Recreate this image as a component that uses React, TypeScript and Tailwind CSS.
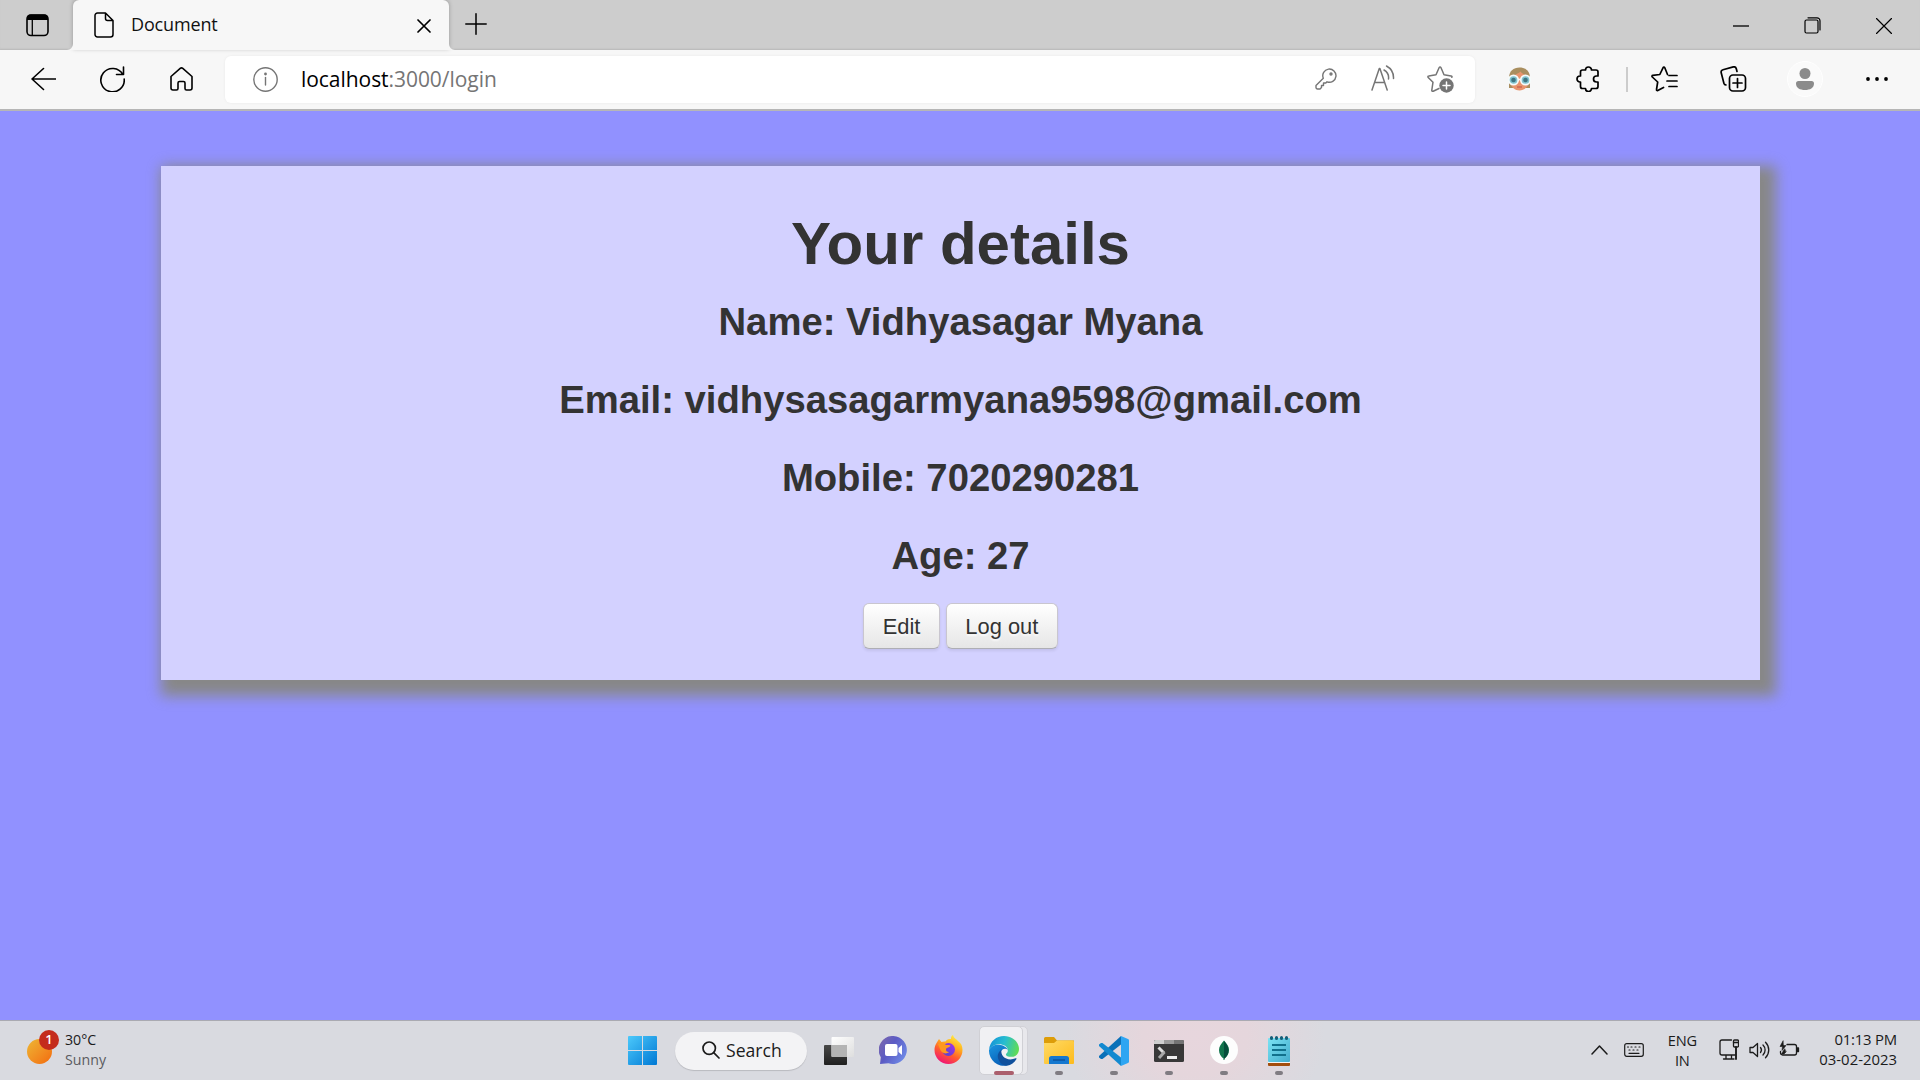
import React from "react";

const line = { fill: "none", stroke: "currentColor", strokeLinecap: "round", strokeLinejoin: "round" } as const;

function TabStrip() {
  return (
    <div className="flex h-[50px] items-stretch bg-[#cdcdcd]">
      <div className="flex w-[73px] items-center pl-[26px] shadow-[inset_0_-2px_2px_-1px_#b8b8b8]">
        <svg width="23" height="23" viewBox="0 0 23 23">
          <rect x="1" y="1" width="21" height="20.5" rx="4" fill="none" stroke="#000" strokeWidth="1.6" />
          <path d="M1 6V4a3.500 3.500 0 0 1 3.500-3.500h14A3.500 3.500 0 0 1 22 4v2z" />
          <path d="M6.300 5v16" stroke="#000" strokeWidth="1.300" />
        </svg>
      </div>
      <div className="relative z-10 flex w-[376px] items-center rounded-t-[6px] bg-[#f7f7f7] pl-[21px] pr-[18px] shadow-[0_-1px_4px_rgba(0,0,0,0.25)]">
        <svg className="absolute -left-[6px] bottom-0" width="6" height="6"><path d="M6 0v6H0a6 6 0 0 0 6-6" fill="#f7f7f7" /></svg>
        <svg className="absolute -right-[6px] bottom-0" width="6" height="6"><path d="M0 0v6h6a6 6 0 0 1-6-6" fill="#f7f7f7" /></svg>
        <svg width="20" height="26" viewBox="0 0 20 26" {...line} strokeWidth="1.500">
          <path d="M11.500 1H3.500A2.500 2.500 0 0 0 1 3.500v19A2.500 2.500 0 0 0 3.500 25h13a2.500 2.500 0 0 0 2.500-2.500V8.500zV6.500a2 2 0 0 0 2 2H19" />
        </svg>
        <span className="ml-[17px] mb-[2px] text-[18px] leading-none tracking-[-0.15px] text-[#111]">Document</span>
        <svg className="mt-[1px] ml-auto" width="14" height="14" viewBox="0 0 14 14" {...line} strokeWidth="1.700"><path d="M1 1l12 12M13 1L1 13" /></svg>
      </div>
      <div className="flex flex-1 items-center pl-[16px] pb-[2px] shadow-[inset_0_-2px_2px_-1px_#b8b8b8]">
        <svg width="22" height="22" viewBox="0 0 22 22" {...line} strokeWidth="1.500"><path d="M11 .8v20.400M.8 11h20.400" /></svg>
        <svg className="ml-auto mr-[55px] mt-[3px]" width="16" height="2"><path d="M0 1h16" stroke="#000" strokeWidth="1.300" /></svg>
        <svg className="mr-[55px] mt-[3px]" width="17" height="17" viewBox="0 0 17 17" {...line} strokeWidth="1.200">
          <rect x="1" y="3" width="13" height="13" rx="1.500" />
          <path d="M4 .8h9a3 3 0 0 1 3 3V13" />
        </svg>
        <svg className="mr-[28px] mt-[3px]" width="16" height="16" viewBox="0 0 16 16" {...line} strokeWidth="1.200"><path d="M.5.5l15 15M15.500.5l-15 15" /></svg>
      </div>
    </div>
  );
}

function Toolbar() {
  return (
    <div className="flex h-[61px] items-center border-b-2 border-[#b6b6b6] bg-[#f7f7f7] pb-px pl-[31px] text-black">
      <svg width="25" height="24" viewBox="0 0 25 24" {...line} strokeWidth="1.600"><path d="M12.500 1.500L1 12l11.500 10.500M1 12h23.500" /></svg>
      <svg className="ml-[44px]" width="25" height="26" viewBox="0 0 25 26" {...line} strokeWidth="1.600">
        <path d="M22.800 8.500A11.700 11.700 0 1 0 24.200 13M23.500 1v7.500H16.500" />
      </svg>
      <svg className="ml-[45px]" width="23" height="24" viewBox="0 0 23 24" {...line} strokeWidth="1.600">
        <path d="M1 9.500L10.200 1.400a2 2 0 0 1 2.600 0L22 9.500V21a2 2 0 0 1-2 2h-3.500a1.500 1.500 0 0 1-1.500-1.500V16a1.500 1.500 0 0 0-1.500-1.500h-4A1.500 1.500 0 0 0 8 16v5.500A1.500 1.500 0 0 1 6.500 23H3a2 2 0 0 1-2-2z" />
      </svg>
      <div className="ml-[32px] flex h-[47px] w-[1250px] items-center rounded-[6px] bg-white pl-[28px] pr-[21px] text-[#757575] shadow-[0_0_3px_rgba(0,0,0,0.06)]">
        <svg width="25" height="25" viewBox="0 0 25 25" {...line} strokeWidth="1.400">
          <circle cx="12.500" cy="12.500" r="11.700" /><path d="M12.500 10.500V18" /><circle cx="12.500" cy="7" r=".7" fill="currentColor" />
        </svg>
        <span className="ml-[23px] text-[21px] leading-none tracking-[-0.05px]"><span className="text-black">localhost</span>:3000/login</span>
        <svg className="ml-auto" width="22" height="22" viewBox="0 0 22 22" {...line} strokeWidth="1.400">
          <path d="M8.300 10.200A6.600 6.600 0 1 1 12 13.800L10.800 15H8.500v2.500H6.500V19.500L5 21H2.500A1.500 1.500 0 0 1 1 19.500V17.500z" /><circle cx="16" cy="6" r="1" />
        </svg>
        <svg className="ml-[34px] mb-[2px]" width="24" height="26" viewBox="0 0 24 26" {...line} strokeWidth="1.500">
          <path d="M1 25L8.300 3.500h.6L16.200 25M3.700 17.500h9.800M13 5a9 9 0 0 1 4.500 9M15.500 1a13.500 13.500 0 0 1 7 12.500" />
        </svg>
        <svg className="ml-[32px]" width="27" height="28" viewBox="0 0 27 28" {...line} strokeWidth="1.500">
          <path d="M12 23.500l-5.800 2.700c-.8.400-1.500-.2-1.400-1L6 17.200 1.200 12.500c-.5-.5-.3-1.500.6-1.600L9 9.700 12.200 2.500c.4-.8 1.300-.8 1.700 0L17 9.700l7 1.200c.9.200 1.200.8.800 1.400" />
          <circle cx="19.500" cy="20.500" r="7.200" fill="currentColor" stroke="none" />
          <path d="M19.500 17v7M16 20.500h7" stroke="#fff" />
        </svg>
      </div>
      <svg className="ml-[32px]" width="25" height="24" viewBox="0 0 25 24">
        <path d="M2 21V11C2 4 6.500.5 12.500.5S23 4 23 11v10z" fill="#a98e5f" />
        <path d="M3.500 13c0-5 6.500-5 10-8.500 2 3 8 3.500 8 8.500v2c0 5.500-5 8.500-9 8.500s-9-3-9-8.500z" fill="#e8946d" />
        <circle cx="6.500" cy="13" r="4.700" fill="#7fc3cf" stroke="#f5fbfb" strokeWidth="1.700" />
        <circle cx="18.500" cy="13" r="4.700" fill="#7fc3cf" stroke="#f5fbfb" strokeWidth="1.700" />
        <path d="M11 12.500h3" stroke="#f5fbfb" strokeWidth="1.700" />
        <circle cx="6.500" cy="13" r="2.300" fill="#3f7480" /><circle cx="18.500" cy="13" r="2.300" fill="#3f7480" />
        <path d="M10 20h5" stroke="#c95b4e" strokeWidth="1.200" />
      </svg>
      <svg className="ml-[44px]" width="24" height="26" viewBox="0 0 24 26" {...line} strokeWidth="1.700">
        <path d="M9.500 4a3 3 0 0 1 6 0H20a2 2 0 0 1 2 2v4h-1.500a3 3 0 0 0 0 6H22v4.500a2 2 0 0 1-2 2h-4.500a3 3 0 0 1-6 0H6.500a2 2 0 0 1-2-2V16H4a3 3 0 0 1 0-6h.5V6a2 2 0 0 1 2-2z" />
      </svg>
      <div className="ml-[26px] h-[25px] w-[2px] bg-[#cccccc]" />
      <svg className="ml-[23px]" width="27" height="26" viewBox="0 0 27 26" {...line} strokeWidth="1.700">
        <path d="M12.500 21.500l-5.700 3c-.8.400-1.500-.2-1.300-1L6.700 16 1.300 11c-.6-.6-.3-1.500.5-1.600L8.800 8.500 12 1.800c.4-.8 1.400-.8 1.800 0L16.500 8.500M18 9.500h8M16 15h10M18 20.500h8" />
      </svg>
      <svg className="ml-[42px]" width="27" height="26" viewBox="0 0 27 26" {...line} strokeWidth="1.700">
        <rect x="9.500" y="9" width="16" height="16" rx="3.500" />
        <path d="M17.500 12.500v9M13 17h9M17 5.500l-.7-2.800a2.500 2.500 0 0 0-3-1.800L3 3.700A2.500 2.500 0 0 0 1.200 6.700l2.700 10.500A2.500 2.500 0 0 0 6 19" />
      </svg>
      <div className="ml-[40px] flex h-[36px] w-[36px] items-center justify-center rounded-full border border-white bg-[#fafafa]">
        <svg width="18" height="22" viewBox="0 0 18 22" fill="#8b8b8b"><circle cx="9" cy="5.500" r="5.500" /><path d="M0 15.500A2.500 2.500 0 0 1 2.500 13h13a2.500 2.500 0 0 1 2.500 2.500C18 20 14 22 9 22s-9-2-9-6.500" /></svg>
      </div>
      <svg className="ml-[43px]" width="22" height="4"><circle cx="2" cy="2" r="1.900" /><circle cx="11" cy="2" r="1.900" /><circle cx="20" cy="2" r="1.900" /></svg>
    </div>
  );
}

function Button({ children }: { children: React.ReactNode }) {
  return (
    <button className="h-[46px] rounded-[6px] border border-[#c9c6cf] border-b-[#aeaeb4] bg-linear-to-b from-white to-[#e6e6e6] px-[18.5px] text-[21.875px] leading-[31px] text-[#333] shadow-[0_2px_3px_rgba(0,0,0,0.08)] [text-shadow:0_2px_2px_rgba(255,255,255,0.75)]">
      {children}
    </button>
  );
}

const details = ["Name: Vidhyasagar Myana", "Email: vidhysasagarmyana9598@gmail.com", "Mobile: 7020290281", "Age: 27"];

function Page() {
  return (
    <main className="flex-1 bg-[#9191ff] pt-[55px] font-['Liberation_Sans',Arial,sans-serif]">
      <section className="ml-[161px] h-[514px] w-[1599px] bg-[#d3d1ff] pt-[47px] text-center text-[#333] shadow-[7.8px_7.8px_13px_7.8px_#888]">
        <h1 className="mb-[15.6px] text-[60px] leading-[62.5px] font-bold">Your details</h1>
        {details.map((d) => (
          <h3 key={d} className="mb-[15.6px] text-[38.25px] leading-[62.5px] font-bold">{d}</h3>
        ))}
        <div className="flex justify-center gap-[6px]">
          <Button>Edit</Button>
          <Button>Log out</Button>
        </div>
      </section>
    </main>
  );
}

function TaskApp({ children, active }: { children: React.ReactNode; active?: boolean }) {
  return (
    <div className="relative flex h-[59px] w-[55px] items-center justify-center">
      {children}
      <div className={active ? "absolute bottom-[5px] h-[4px] w-[20px] rounded-full bg-[#ab5f6d]" : "absolute bottom-[5px] h-[4px] w-[8px] rounded-full bg-[#807c82]"} />
    </div>
  );
}

function Taskbar() {
  return (
    <footer className="flex h-[60px] items-center border-t border-[#aaaab2] bg-[#d9dae0] bg-[radial-gradient(ellipse_130px_100px_at_1195px_15px,#e7d6dd_0%,#e5d6dc_40%,transparent_100%)] text-[#1b1b1b]">
      <div className="flex w-[628px] items-center pb-[2px] pl-[27px]">
        <div className="relative mr-[6px] mb-[6px] h-[34px] w-[32px]">
          <div className="absolute bottom-0 left-0 h-[25px] w-[25px] rounded-full bg-linear-to-br from-[#ecb634] to-[#f2690d]" />
          <div className="absolute top-0 right-0 flex h-[20px] w-[20px] items-center justify-center rounded-full bg-[#c42b1c] text-[13px] leading-none font-semibold text-white">1</div>
        </div>
        <div className="text-[14.2px] leading-[20px]">
          <div>30°C</div>
          <div className="text-[#5b5b5f]">Sunny</div>
        </div>
      </div>
      <svg width="29" height="29" viewBox="0 0 29 29">
        <defs><linearGradient id="win" x1="0" y1="0" x2="1" y2="1" gradientUnits="objectBoundingBox"><stop stopColor="#4cc9fb" /><stop offset="1" stopColor="#0078d4" /></linearGradient></defs>
        <path d="M1 0h13v14H0V1a1 1 0 0 1 1-1M15 0h13a1 1 0 0 1 1 1v13H15zM0 15h14v14H1a1 1 0 0 1-1-1zM15 15h14v13a1 1 0 0 1-1 1H15z" fill="url(#win)" />
      </svg>
      <div className="ml-[18px] flex h-[38px] w-[132px] items-center rounded-full bg-[#f3f3f5] pl-[27px] shadow-[0_1px_1px_rgba(0,0,0,0.15)]">
        <svg className="mb-[2px]" width="18" height="18" viewBox="0 0 18 18" {...line} strokeWidth="1.700"><circle cx="7.200" cy="7.200" r="6.200" /><path d="M11.700 11.700L17 17" /></svg>
        <span className="ml-[6px] text-[17.6px] leading-none">Search</span>
      </div>
      <svg className="ml-[17px]" width="30" height="28" viewBox="0 0 30 28">
        <defs>
          <linearGradient id="tv1" x1="0" y1="0" x2="0" y2="1"><stop stopColor="#484848" /><stop offset="1" stopColor="#202020" /></linearGradient>
          <linearGradient id="tv2" x1="0" y1="0" x2="1" y2="1"><stop stopColor="#fff" /><stop offset="1" stopColor="#dedede" /></linearGradient>
        </defs>
        <rect x="0" y="8" width="23" height="20" rx="1" fill="url(#tv1)" />
        <rect x="7.500" y="0" width="22.500" height="20" rx="1" fill="url(#tv2)" />
        <path d="M7.500 8H23v12H8.500a1 1 0 0 1-1-1z" fill="#b4b4b4" />
      </svg>
      <svg className="ml-[25px]" width="29" height="29" viewBox="0 0 29 29">
        <defs><linearGradient id="chat" x1="0" y1="0" x2="1" y2="0.6"><stop stopColor="#806aaa" /><stop offset=".5" stopColor="#5c5bc4" /><stop offset="1" stopColor="#6d86e4" /></linearGradient></defs>
        <path d="M14.500 0a14 14 0 1 1-5 27.300L1 28l.8-6.800A14 14 0 0 1 14.500 0" fill="url(#chat)" />
        <rect x="6" y="8" width="12.500" height="12" rx="2" fill="#fff" /><path d="M19.500 12l3.500-3v10l-3.500-3z" fill="#fff" />
      </svg>
      <svg className="ml-[26px] mb-[2px]" width="29" height="29" viewBox="0 0 29 29">
        <defs>
          <linearGradient id="ff" x1=".8" y1="0" x2=".3" y2="1"><stop stopColor="#fff14a" /><stop offset=".35" stopColor="#ffb11f" /><stop offset=".65" stopColor="#ff5a30" /><stop offset="1" stopColor="#f0107a" /></linearGradient>
          <linearGradient id="ffp" x1="1" y1="0" x2="0" y2="1"><stop stopColor="#a632e8" /><stop offset="1" stopColor="#4b45cf" /></linearGradient>
        </defs>
        <path d="M5 4l2.500 3c1-.5 2.500-.7 4-.5C13 4 15.500 4 17 4c-.2-2 .8-3.500 2-4 .5 3 3.500 4 5.500 6.500C27 8 28.500 11 28.500 15a14 14 0 0 1-28 0C.5 10 3 7.500 5 4" fill="url(#ff)" />
        <circle cx="14.500" cy="14.500" r="6.500" fill="url(#ffp)" />
        <path d="M4 9c3-2 6-1 8 1 2 0 4 0 4.500.8-.5 1.700-4 1.700-4.500 3.200-.4 2 1 3 3 3-3 3-8 1-9-3" fill="#ff981f" />
      </svg>
      <div className="ml-[13px] flex">
        <TaskApp active>
          <div className="absolute top-[5px] left-[8px] h-[49px] w-[44px] rounded-[5px] border border-[#d2d2d8] bg-[#e8e8ec]" />
          <div className="absolute top-[5px] left-[3px] h-[49px] w-[44px] rounded-[5px] border border-[#d0d0d5] bg-[#f0f0f3]" />
          <svg className="relative" width="30" height="30" viewBox="0 0 30 30">
            <defs>
              <linearGradient id="eg" x1="0" y1=".3" x2="1" y2=".5"><stop stopColor="#1492d8" /><stop offset=".5" stopColor="#27bdd0" /><stop offset="1" stopColor="#60dc55" /></linearGradient>
              <linearGradient id="eb" x1="0" y1="0" x2=".5" y2="1"><stop stopColor="#1a96e0" /><stop offset="1" stopColor="#0a61b9" /></linearGradient>
            </defs>
            <path d="M0 14C.8 5 7.500 0 15 0c9 0 15 6.500 15 13 0 5-3.500 7.800-7.500 7.800-4 0-6-1.500-5.500-2.800 1-.8 1.800-1.800 1.800-3.500C18.800 9 11 7 6 9 3 10 1 12 0 14" fill="url(#eg)" />
            <path d="M0 14C2 9.500 7 8 11.500 9c4 .8 7 3 7.200 5.200C17 11.500 12 12.500 11 18c-.8 5 3 9.500 7 11.500A15 15 0 0 1 0 15z" fill="url(#eb)" />
            <path d="M12.500 13.500c-3 2.500-5 6-2.800 10.500C11.500 28 15 30 18 29.700c4-.7 7.500-3 9.500-6.700.3-.7-.2-1-.8-.7C18 26 11 20 12.500 13.500" fill="#11519d" />
          </svg>
        </TaskApp>
        <TaskApp>
          <svg width="30" height="28" viewBox="0 0 30 28">
            <defs><linearGradient id="fo" x1="0" y1="0" x2="1" y2="1"><stop stopColor="#ffda65" /><stop offset="1" stopColor="#fdbb1c" /></linearGradient></defs>
            <path d="M0 1.500A1.500 1.500 0 0 1 1.500 0h8.500l3 3.500h17V10H0z" fill="#dd9d09" />
            <path d="M0 6h10l3-2.500h15.500A1.500 1.500 0 0 1 30 5v21a1 1 0 0 1-1 1H1a1 1 0 0 1-1-1z" fill="url(#fo)" />
            <path d="M5 27v-5.500A2.500 2.500 0 0 1 7.500 19h15a2.500 2.500 0 0 1 2.500 2.500V27z" fill="#1578cf" /><path d="M9 23h12" stroke="#0b4b90" strokeWidth="1.200" />
          </svg>
        </TaskApp>
        <TaskApp>
          <svg width="30" height="30" viewBox="0 0 30 30">
            <path d="M22 0L0 20v1.500L2 23h1.500L22 8.500z" fill="#0a70b8" />
            <path d="M22 30L0 10V8.500L2 7h1.500L22 21.500z" fill="#1389d0" />
            <path d="M22 0l7 3a1.500 1.500 0 0 1 1 1.500v21a1.500 1.500 0 0 1-1 1.500l-7 3z" fill="#2fa5f2" />
          </svg>
        </TaskApp>
        <TaskApp>
          <svg className="mt-[1px]" width="30" height="22" viewBox="0 0 30 22">
            <rect width="30" height="22" rx="1.500" fill="#383838" />
            <path d="M0 4V1.500A1.500 1.500 0 0 1 1.500 0H10v4z" fill="#cfcfcf" /><path d="M10 0h10v4H10z" fill="#9b9b9b" /><path d="M20 0h8.500A1.500 1.500 0 0 1 30 1.500V4H20z" fill="#747474" />
            <path d="M4.500 7.500L10 13" stroke="#ddd" strokeWidth="3" /><path d="M10.500 12L5 18" stroke="#a8a8a8" strokeWidth="3" /><path d="M13 16h10v3H13z" fill="#eee" />
          </svg>
        </TaskApp>
        <TaskApp>
          <svg className="mb-px" width="28" height="28" viewBox="0 0 28 28"><circle cx="14" cy="14" r="14" fill="#fdfdfd" /><path d="M14 4.500c3 3.500 5 6 5 9.500 0 4-2 6.500-4.500 8.500V24h-1v-1.500C11 20.500 9 18 9 14c0-3.500 2-6 5-9.500" fill="#11744c" /><path d="M14 5v18c3-2.500 4.500-5 4.500-9 0-3-2-6-4.500-9" fill="#064e3b" /></svg>
        </TaskApp>
        <TaskApp>
          <svg width="22" height="30" viewBox="0 0 22 30">
            <defs><linearGradient id="np" x1="0" y1="0" x2="1" y2="1"><stop stopColor="#7be3f4" /><stop offset="1" stopColor="#43abcc" /></linearGradient></defs>
            <path d="M0 26h22v3a1 1 0 0 1-1 1H1a1 1 0 0 1-1-1z" fill="#a34d0d" /><path d="M0 25h22v2H0z" fill="#f4f4f4" />
            <rect y="2" width="22" height="24" rx="1" fill="url(#np)" />
            <path d="M4 9h14M4 14h14M4 19h14" stroke="#11708c" strokeWidth="1.900" />
            <path d="M3.500 1.500v1M8.500 1.500v1M13.500 1.500v1M18.500 1.500v1" stroke="#155f78" strokeWidth="3" strokeLinecap="round" />
          </svg>
        </TaskApp>
      </div>
      <div className="ml-auto flex items-center pr-[23px] pb-[2px]">
        <svg width="17" height="10" viewBox="0 0 17 10" {...line} strokeWidth="1.500"><path d="M1 9l7.500-8L16 9" /></svg>
        <svg className="ml-[16px]" width="20" height="14" viewBox="0 0 20 14" {...line} strokeWidth="1.200">
          <rect x=".7" y=".7" width="18.600" height="12.600" rx="2" /><path d="M3.500 4h1M7 4h1M11 4h1M15 4h1M5 7h1M9 7h1M13 7h1M5 10.300h10" />
        </svg>
        <div className="ml-[22px] w-[32px] text-center text-[14.6px] leading-[20px] tracking-[-0.2px]"><div>ENG</div><div>IN</div></div>
        <svg className="ml-[21px]" width="20" height="21" viewBox="0 0 20 21" {...line} strokeWidth="1.300">
          <path d="M12.500 1H3a2 2 0 0 0-2 2v11a2 2 0 0 0 2 2h13M7 16v4M12.500 16v4M4.500 20H15" /><rect x="14.500" y="1" width="5" height="7" rx="1" /><path d="M14.500 3.500h5" /><path d="M17 8v12" strokeWidth="1.900" />
        </svg>
        <svg className="ml-[10px]" width="21" height="18" viewBox="0 0 21 18" {...line} strokeWidth="1.300">
          <path d="M1 6.500v5h3l4.500 4V2.500L4 6.500zM11.500 6.500a4 4 0 0 1 0 5M14 4a7 7 0 0 1 0 10M16.500 1.200a11 11 0 0 1 0 15.600" />
        </svg>
        <svg className="ml-[9px] mb-[2px]" width="21" height="18" viewBox="0 0 21 18" {...line} strokeWidth="1.300">
          <path d="M8 4.500h7.500a2 2 0 0 1 2 2V13a2 2 0 0 1-2 2h-12a2 2 0 0 1-2-2v-1.500" /><path d="M18 8v3.500h1.500V8z" fill="currentColor" /><path d="M4 1L1 6.500h2.500L3 10.500l4-5H4.500zM5.500 9L2.500 14h2.500l2-2z" fill="currentColor" strokeWidth=".6" />
        </svg>
        <div className="ml-[19px] pb-[2px] text-right text-[14.9px] leading-[20px]"><div className="tracking-[-0.2px]">01:13 PM</div><div>03-02-2023</div></div>
      </div>
    </footer>
  );
}

export default function App() {
  return (
    <div className="flex h-[1080px] w-[1920px] flex-col overflow-hidden font-['Open_Sans','Noto_Sans',sans-serif]">
      <TabStrip />
      <Toolbar />
      <Page />
      <Taskbar />
    </div>
  );
}
